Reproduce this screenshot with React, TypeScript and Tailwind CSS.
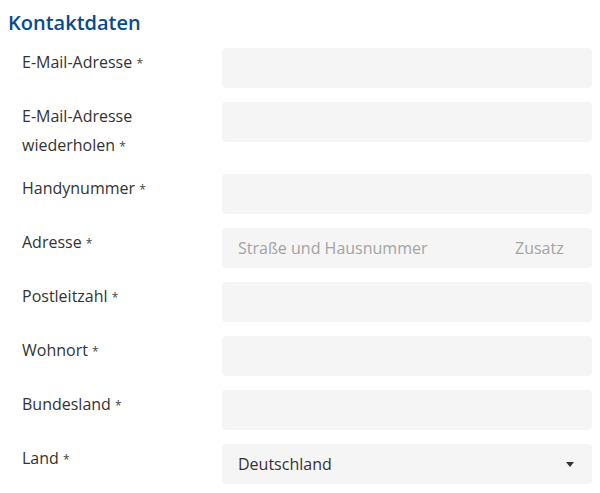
import React from 'react';

const fields = [
  { label: 'E-Mail-Adresse', type: 'text' },
  { label: 'E-Mail-Adresse wiederholen', type: 'text' },
  { label: 'Handynummer', type: 'text' },
  { label: 'Adresse', type: 'address' },
  { label: 'Postleitzahl', type: 'text' },
  { label: 'Wohnort', type: 'text' },
  { label: 'Bundesland', type: 'text' },
  { label: 'Land', type: 'select' },
];

function Field({ type }: { type: string }) {
  if (type === 'address') {
    return (
      <div className="flex h-10 w-[370px] rounded bg-[#f5f5f5]">
        <input
          className="min-w-0 flex-1 bg-transparent px-4 text-base text-[#333] outline-none placeholder:text-[#a3a3a3]"
          placeholder="Straße und Hausnummer"
        />
        <input
          className="w-[93px] bg-transparent px-4 text-base text-[#333] outline-none placeholder:text-[#a3a3a3]"
          placeholder="Zusatz"
        />
      </div>
    );
  }
  if (type === 'select') {
    return (
      <div className="flex h-10 w-[370px] items-center justify-between rounded bg-[#f5f5f5] pl-4 pr-[18px] text-base text-[#333]">
        <span>Deutschland</span>
        <span className="h-0 w-0 border-x-4 border-t-[5px] border-x-transparent border-t-[#333]" />
      </div>
    );
  }
  return <input className="h-10 w-[370px] rounded bg-[#f5f5f5] px-4 text-base text-[#333] outline-none" />;
}

export default function App() {
  return (
    <div className="min-h-[493px] bg-white px-2 pt-[9px] font-['Open_Sans',sans-serif]">
      <h2 className="text-[20px] font-semibold leading-7 text-[#0b4a89]">Kontaktdaten</h2>
      <div className="mt-[11px] flex flex-col gap-[14px] pl-[14px]">
        {fields.map((f) => (
          <div key={f.label} className="flex items-start">
            <label className="w-[200px] pr-16 text-base leading-[29px] text-[#333]">
              {f.label} <span className="text-[12px] leading-none text-[#444]">*</span>
            </label>
            <Field type={f.type} />
          </div>
        ))}
      </div>
    </div>
  );
}
